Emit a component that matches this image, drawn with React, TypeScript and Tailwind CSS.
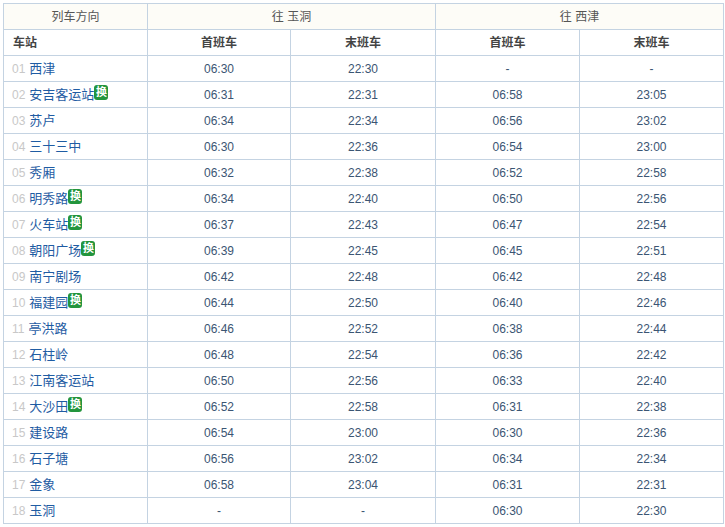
import React from 'react';

type Row = { no: string; name: string; transfer?: boolean; y1: string; y2: string; x1: string; x2: string };

const rows: Row[] = [
  { no: '01', name: '西津', y1: '06:30', y2: '22:30', x1: '-', x2: '-' },
  { no: '02', name: '安吉客运站', transfer: true, y1: '06:31', y2: '22:31', x1: '06:58', x2: '23:05' },
  { no: '03', name: '苏卢', y1: '06:34', y2: '22:34', x1: '06:56', x2: '23:02' },
  { no: '04', name: '三十三中', y1: '06:30', y2: '22:36', x1: '06:54', x2: '23:00' },
  { no: '05', name: '秀厢', y1: '06:32', y2: '22:38', x1: '06:52', x2: '22:58' },
  { no: '06', name: '明秀路', transfer: true, y1: '06:34', y2: '22:40', x1: '06:50', x2: '22:56' },
  { no: '07', name: '火车站', transfer: true, y1: '06:37', y2: '22:43', x1: '06:47', x2: '22:54' },
  { no: '08', name: '朝阳广场', transfer: true, y1: '06:39', y2: '22:45', x1: '06:45', x2: '22:51' },
  { no: '09', name: '南宁剧场', y1: '06:42', y2: '22:48', x1: '06:42', x2: '22:48' },
  { no: '10', name: '福建园', transfer: true, y1: '06:44', y2: '22:50', x1: '06:40', x2: '22:46' },
  { no: '11', name: '亭洪路', y1: '06:46', y2: '22:52', x1: '06:38', x2: '22:44' },
  { no: '12', name: '石柱岭', y1: '06:48', y2: '22:54', x1: '06:36', x2: '22:42' },
  { no: '13', name: '江南客运站', y1: '06:50', y2: '22:56', x1: '06:33', x2: '22:40' },
  { no: '14', name: '大沙田', transfer: true, y1: '06:52', y2: '22:58', x1: '06:31', x2: '22:38' },
  { no: '15', name: '建设路', y1: '06:54', y2: '23:00', x1: '06:30', x2: '22:36' },
  { no: '16', name: '石子塘', y1: '06:56', y2: '23:02', x1: '06:34', x2: '22:34' },
  { no: '17', name: '金象', y1: '06:58', y2: '23:04', x1: '06:31', x2: '22:31' },
  { no: '18', name: '玉洞', y1: '-', y2: '-', x1: '06:30', x2: '22:30' },
];

const cell = 'border border-[#c4d3e2] h-[26px] p-0 text-center';

const App: React.FC = () => {
  return (
    <div className="w-[725px] h-[527px] bg-white pt-[3px] pl-[3px] font-['Liberation_Sans','Noto_Sans_CJK_SC',sans-serif] text-[12px]">
      <table className="w-[720px] border-collapse table-fixed">
        <colgroup>
          <col className="w-[144px]" />
          <col className="w-[143px]" />
          <col className="w-[145px]" />
          <col className="w-[144px]" />
          <col className="w-[144px]" />
        </colgroup>
        <thead>
          <tr className="bg-[#fdfcf7] text-[#555]">
            <th className={`${cell} font-normal`}>列车方向</th>
            <th colSpan={2} className={`${cell} font-normal`}>往 玉洞</th>
            <th colSpan={2} className={`${cell} font-normal`}>往 西津</th>
          </tr>
          <tr className="text-[#444]">
            <th className={`${cell} font-bold text-left pl-[9px]`}>车站</th>
            <th className={`${cell} font-bold`}>首班车</th>
            <th className={`${cell} font-bold`}>末班车</th>
            <th className={`${cell} font-bold`}>首班车</th>
            <th className={`${cell} font-bold`}>末班车</th>
          </tr>
        </thead>
        <tbody>
          {rows.map(r => (
            <tr key={r.no} className="text-[#3b5573]">
              <td className={`${cell} text-left pl-[8px]`}>
                <span className="text-[#c8c8c8] text-[12px] mr-[4px]">{r.no}</span>
                <span className="text-[#1f5ca3] text-[13px]">{r.name}</span>
                {r.transfer && (
                  <span className="inline-flex items-center justify-center w-[14px] h-[15px] rounded-[3px] bg-[#23953d] text-white text-[11px] font-bold leading-none align-[3px]">
                    换
                  </span>
                )}
              </td>
              <td className={cell}>{r.y1}</td>
              <td className={cell}>{r.y2}</td>
              <td className={cell}>{r.x1}</td>
              <td className={cell}>{r.x2}</td>
            </tr>
          ))}
        </tbody>
      </table>
    </div>
  );
};

export default App;
